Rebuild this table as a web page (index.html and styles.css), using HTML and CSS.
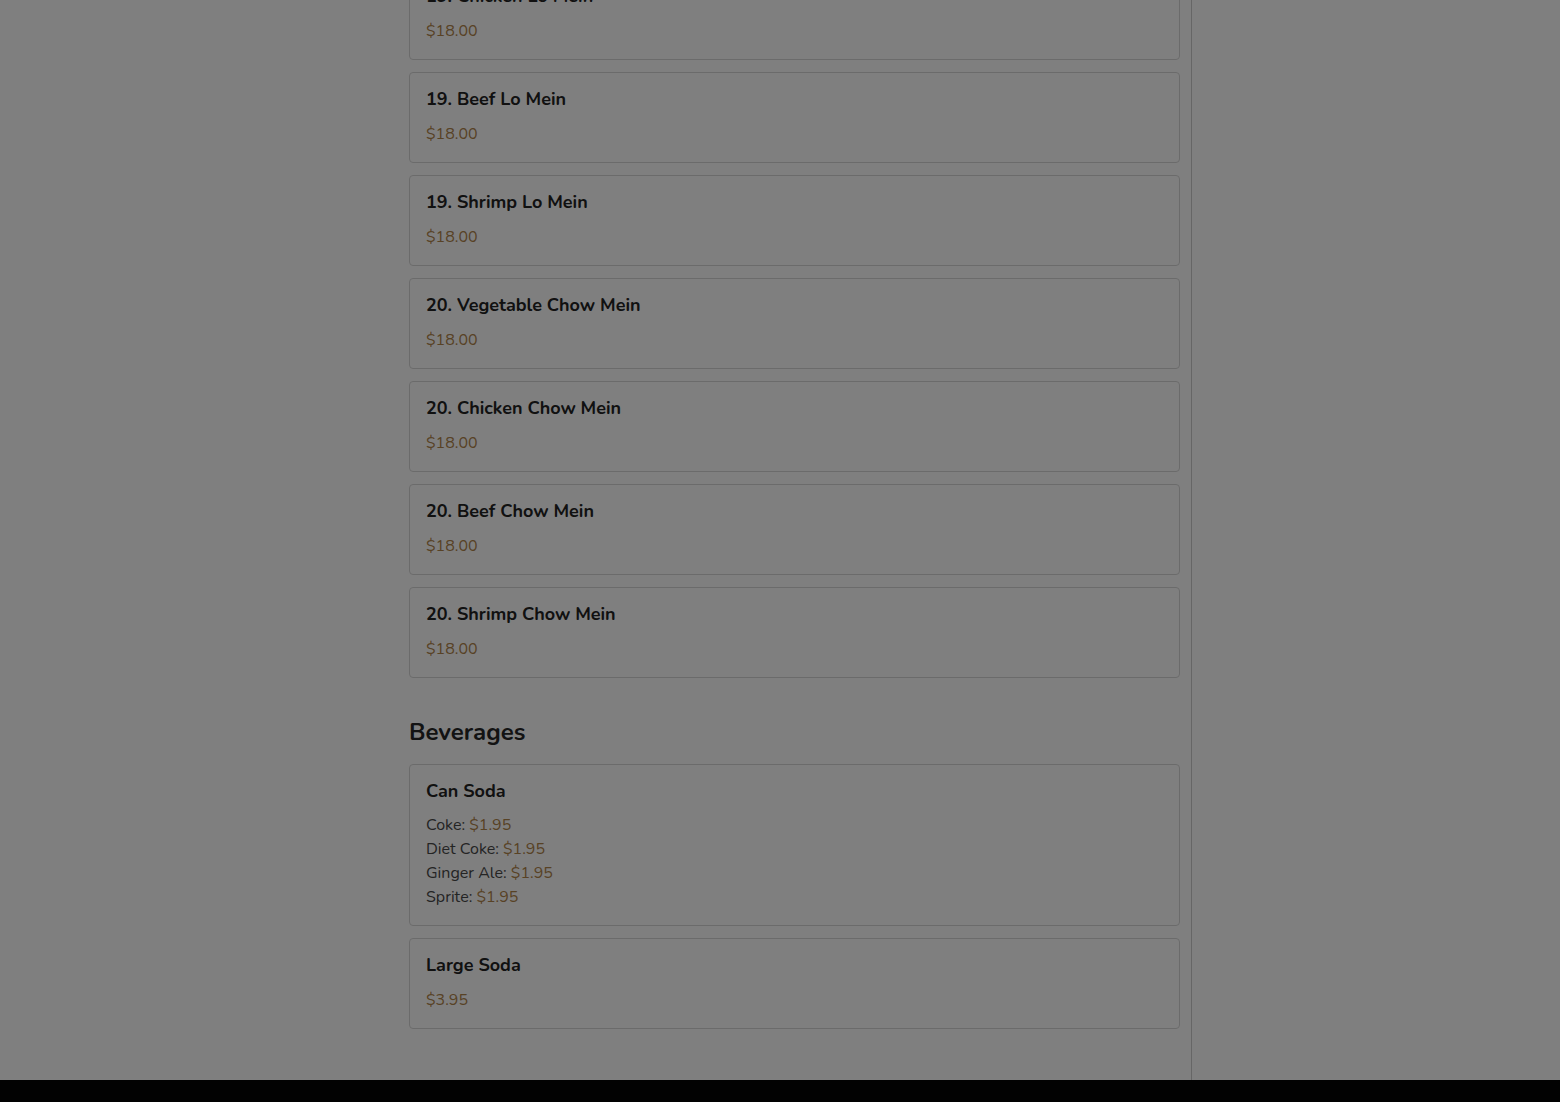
FILE: index.html
```html
<!DOCTYPE html>
<html lang="en">
<head>
<meta charset="utf-8">
<title>Menu</title>
<link rel="stylesheet" href="styles.css">
</head>
<body>
<div class="layout">
  <aside class="left-col"></aside>
  <main class="menu">
    <div class="item-list">
      <div class="item-card">
        <div class="item-name">19. Chicken Lo Mein</div>
        <div class="price">$18.00</div>
      </div>
      <div class="item-card">
        <div class="item-name">19. Beef Lo Mein</div>
        <div class="price">$18.00</div>
      </div>
      <div class="item-card">
        <div class="item-name">19. Shrimp Lo Mein</div>
        <div class="price">$18.00</div>
      </div>
      <div class="item-card">
        <div class="item-name">20. Vegetable Chow Mein</div>
        <div class="price">$18.00</div>
      </div>
      <div class="item-card">
        <div class="item-name">20. Chicken Chow Mein</div>
        <div class="price">$18.00</div>
      </div>
      <div class="item-card">
        <div class="item-name">20. Beef Chow Mein</div>
        <div class="price">$18.00</div>
      </div>
      <div class="item-card">
        <div class="item-name">20. Shrimp Chow Mein</div>
        <div class="price">$18.00</div>
      </div>
    </div>

    <section class="category">
      <h2 class="category-title">Beverages</h2>
      <div class="item-list">
        <div class="item-card">
          <div class="item-name">Can Soda</div>
          <ul class="options">
            <li>Coke: <span class="price">$1.95</span></li>
            <li>Diet Coke: <span class="price">$1.95</span></li>
            <li>Ginger Ale: <span class="price">$1.95</span></li>
            <li>Sprite: <span class="price">$1.95</span></li>
          </ul>
        </div>
        <div class="item-card">
          <div class="item-name">Large Soda</div>
          <div class="price">$3.95</div>
        </div>
      </div>
    </section>
  </main>
  <aside class="cart-col"></aside>
</div>
<footer class="site-footer"></footer>
<div class="backdrop"></div>
</body>
</html>
```

FILE: styles.css
```css
* { box-sizing: border-box; }

html, body {
  margin: 0;
  padding: 0;
  background: #ffffff;
  font-family: "Nunito", "Lato", "Noto Sans", sans-serif;
  color: #2a2a2a;
}

.layout {
  display: grid;
  grid-template-columns: 397px 794px 1fr;
  min-height: 1080px;
}

.menu {
  padding: 0 11px 40px 12px;
  margin-top: -31px;
}

.cart-col {
  border-left: 1px solid #cccccc;
}

.item-list {
  display: flex;
  flex-direction: column;
  gap: 12px;
}

.item-card {
  border: 1px solid #d6d6d6;
  border-radius: 4px;
  padding: 16px;
  background: #ffffff;
}

.item-name {
  font-size: 18px;
  font-weight: 700;
  line-height: 20px;
  color: #222222;
  margin-bottom: 13px;
}

.price {
  font-size: 16px;
  line-height: 24px;
  color: #b0844a;
}

.options {
  list-style: none;
  margin: -1px 0 0 0;
  padding: 0;
  font-size: 16px;
  line-height: 24px;
  color: #484848;
}

.category {
  margin-top: 38px;
}

.category-title {
  margin: 0 0 16px 0;
  font-size: 24px;
  line-height: 32px;
  font-weight: 700;
  color: #262626;
}

.site-footer {
  height: 300px;
  background: #050505;
}

.backdrop {
  position: fixed;
  inset: 0;
  background: rgba(0, 0, 0, 0.5);
}
```
